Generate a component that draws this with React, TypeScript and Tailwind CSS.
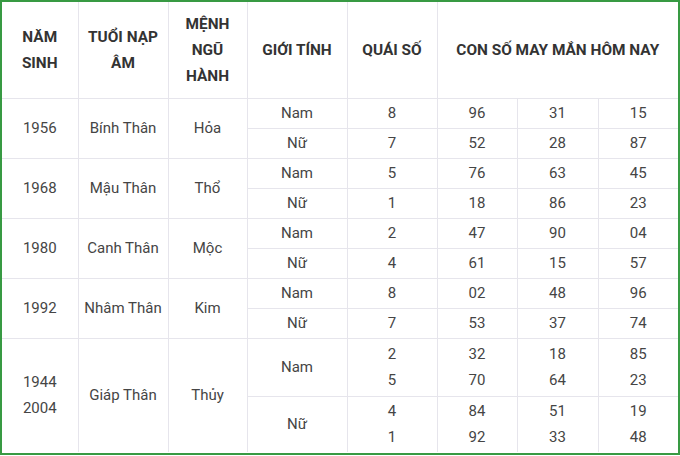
import React from "react";

type Row = {
  gender: string;
  quai: string[];
  nums: string[][];
  h: string;
};

type Group = {
  years: string[];
  tuoi: string;
  menh: string;
  rows: Row[];
};

const groups: Group[] = [
  {
    years: ["1956"],
    tuoi: "Bính Thân",
    menh: "Hỏa",
    rows: [
      { gender: "Nam", quai: ["8"], nums: [["96"], ["31"], ["15"]], h: "h-[30px]" },
      { gender: "Nữ", quai: ["7"], nums: [["52"], ["28"], ["87"]], h: "h-[30px]" },
    ],
  },
  {
    years: ["1968"],
    tuoi: "Mậu Thân",
    menh: "Thổ",
    rows: [
      { gender: "Nam", quai: ["5"], nums: [["76"], ["63"], ["45"]], h: "h-[30px]" },
      { gender: "Nữ", quai: ["1"], nums: [["18"], ["86"], ["23"]], h: "h-[30px]" },
    ],
  },
  {
    years: ["1980"],
    tuoi: "Canh Thân",
    menh: "Mộc",
    rows: [
      { gender: "Nam", quai: ["2"], nums: [["47"], ["90"], ["04"]], h: "h-[30px]" },
      { gender: "Nữ", quai: ["4"], nums: [["61"], ["15"], ["57"]], h: "h-[30px]" },
    ],
  },
  {
    years: ["1992"],
    tuoi: "Nhâm Thân",
    menh: "Kim",
    rows: [
      { gender: "Nam", quai: ["8"], nums: [["02"], ["48"], ["96"]], h: "h-[30px]" },
      { gender: "Nữ", quai: ["7"], nums: [["53"], ["37"], ["74"]], h: "h-[30px]" },
    ],
  },
  {
    years: ["1944", "2004"],
    tuoi: "Giáp Thân",
    menh: "Thủy",
    rows: [
      {
        gender: "Nam",
        quai: ["2", "5"],
        nums: [["32", "70"], ["18", "64"], ["85", "23"]],
        h: "h-[58px]",
      },
      {
        gender: "Nữ",
        quai: ["4", "1"],
        nums: [["84", "92"], ["51", "33"], ["19", "48"]],
        h: "h-[56px]",
      },
    ],
  },
];

const cell = "border border-[#e6e5ec] p-0 text-center align-middle";

function Lines({ items }: { items: string[] }) {
  return (
    <>
      {items.map((t, i) => (
        <div key={i} className="leading-[26px]">
          {t}
        </div>
      ))}
    </>
  );
}

export default function App() {
  return (
    <div className="w-[680px] h-[455px] border-2 border-[#389a43] bg-white overflow-hidden font-['Roboto',sans-serif]">
      <table className="w-[676px] table-fixed border-collapse border-hidden text-[15px] text-[#454545]">
        <colgroup>
          <col className="w-[76px]" />
          <col className="w-[90px]" />
          <col className="w-[79px]" />
          <col className="w-[100px]" />
          <col className="w-[90px]" />
          <col className="w-[80px]" />
          <col className="w-[81px]" />
          <col className="w-[80px]" />
        </colgroup>
        <thead>
          <tr className="h-[96px] text-[15.4px] font-bold text-[#333] leading-[26px]">
            <th className={cell + " font-bold"}>
              NĂM
              <br />
              SINH
            </th>
            <th className={cell + " font-bold"}>
              TUỔI NẠP
              <br />
              ÂM
            </th>
            <th className={cell + " font-bold"}>
              MỆNH
              <br />
              NGŨ
              <br />
              HÀNH
            </th>
            <th className={cell + " font-bold"}>GIỚI TÍNH</th>
            <th className={cell + " font-bold"}>QUÁI SỐ</th>
            <th className={cell + " font-bold"} colSpan={3}>
              CON SỐ MAY MẮN HÔM NAY
            </th>
          </tr>
        </thead>
        <tbody>
          {groups.map((g) =>
            g.rows.map((r, i) => (
              <tr key={g.tuoi + r.gender} className={r.h}>
                {i === 0 && (
                  <>
                    <td className={cell} rowSpan={2}>
                      <Lines items={g.years} />
                    </td>
                    <td className={cell} rowSpan={2}>
                      {g.tuoi}
                    </td>
                    <td className={cell} rowSpan={2}>
                      {g.menh}
                    </td>
                  </>
                )}
                <td className={cell}>{r.gender}</td>
                <td className={cell}>
                  <Lines items={r.quai} />
                </td>
                {r.nums.map((n, k) => (
                  <td key={k} className={cell}>
                    <Lines items={n} />
                  </td>
                ))}
              </tr>
            ))
          )}
        </tbody>
      </table>
    </div>
  );
}
